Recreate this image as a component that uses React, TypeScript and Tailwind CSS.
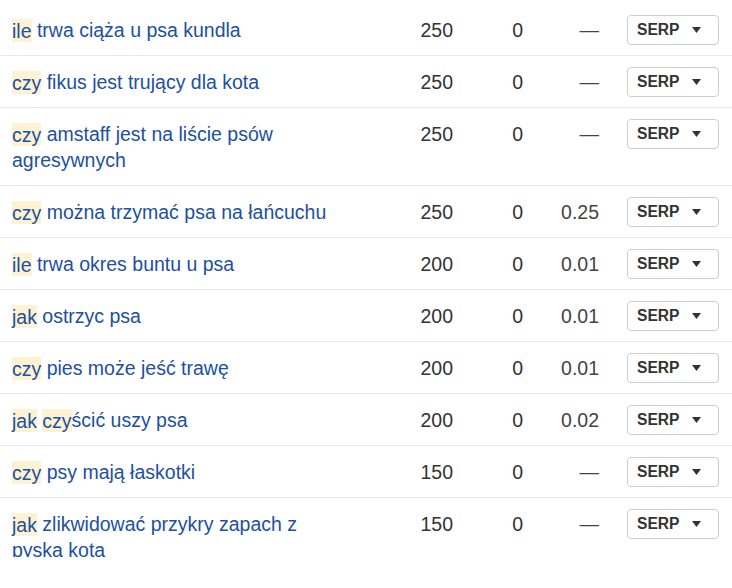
import React from "react";

type Row = {
  keyword: [string, boolean][];
  volume: number;
  kd: number;
  cpc: string | null;
};

const rows: Row[] = [
  { keyword: [["ile", true], [" trwa ciąża u psa kundla", false]], volume: 250, kd: 0, cpc: null },
  { keyword: [["czy", true], [" fikus jest trujący dla kota", false]], volume: 250, kd: 0, cpc: null },
  { keyword: [["czy", true], [" amstaff jest na liście psów agresywnych", false]], volume: 250, kd: 0, cpc: null },
  { keyword: [["czy", true], [" można trzymać psa na łańcuchu", false]], volume: 250, kd: 0, cpc: "0.25" },
  { keyword: [["ile", true], [" trwa okres buntu u psa", false]], volume: 200, kd: 0, cpc: "0.01" },
  { keyword: [["jak", true], [" ostrzyc psa", false]], volume: 200, kd: 0, cpc: "0.01" },
  { keyword: [["czy", true], [" pies może jeść trawę", false]], volume: 200, kd: 0, cpc: "0.01" },
  {
    keyword: [["jak", true], [" ", false], ["czy", true], ["ścić uszy psa", false]],
    volume: 200,
    kd: 0,
    cpc: "0.02",
  },
  { keyword: [["czy", true], [" psy mają łaskotki", false]], volume: 150, kd: 0, cpc: null },
  { keyword: [["jak", true], [" zlikwidować przykry zapach z pyska kota", false]], volume: 150, kd: 0, cpc: null },
];

const SerpButton: React.FC = () => (
  <button
    type="button"
    className="flex items-center w-[92px] h-[30px] pl-[9px] pr-[17px] bg-white border border-[#cfcfcf] rounded-[4px] text-[#333] font-bold text-[15.6px] leading-none"
  >
    <span>SERP</span>
    <svg className="ml-auto" width="9" height="6" viewBox="0 0 9 6">
      <path d="M0 0H9L4.5 6Z" fill="#333" />
    </svg>
  </button>
);

export default function App() {
  return (
    <div
      className="bg-white w-[732px] h-[588px]"
      style={{ fontFamily: '"Liberation Sans", Arial, sans-serif' }}
    >
      <div className="h-[557px] overflow-hidden pt-[4px]">
        <table className="table-fixed w-full border-collapse text-[19.5px] leading-[26px]">
          <colgroup>
            <col className="w-[350px]" />
            <col className="w-[116px]" />
            <col className="w-[70px]" />
            <col className="w-[76px]" />
            <col className="w-[120px]" />
          </colgroup>
          <tbody>
            {rows.map((row, i) => (
              <tr key={i} className="border-b border-[#e8e8e8] align-top">
                <td className="pl-[12px] pr-[13px] pt-[13px] pb-[12px] text-[#21509f]">
                  {row.keyword.map(([text, hl], j) =>
                    hl ? (
                      <span key={j} className="bg-[#fdf3d3] py-[0.5px]">
                        {text}
                      </span>
                    ) : (
                      <span key={j}>{text}</span>
                    )
                  )}
                </td>
                <td className="px-[13px] pt-[13px] pb-[12px] text-right text-[#333]">
                  {row.volume}
                </td>
                <td className="px-[13px] pt-[13px] pb-[12px] text-right text-[#333]">
                  {row.kd}
                </td>
                <td className="px-[13px] pt-[13px] pb-[12px] text-right text-[#444]">
                  {row.cpc ?? "—"}
                </td>
                <td className="pl-[15px] pr-[13px] pt-[11px] pb-[10px]">
                  <SerpButton />
                </td>
              </tr>
            ))}
          </tbody>
        </table>
      </div>
    </div>
  );
}
